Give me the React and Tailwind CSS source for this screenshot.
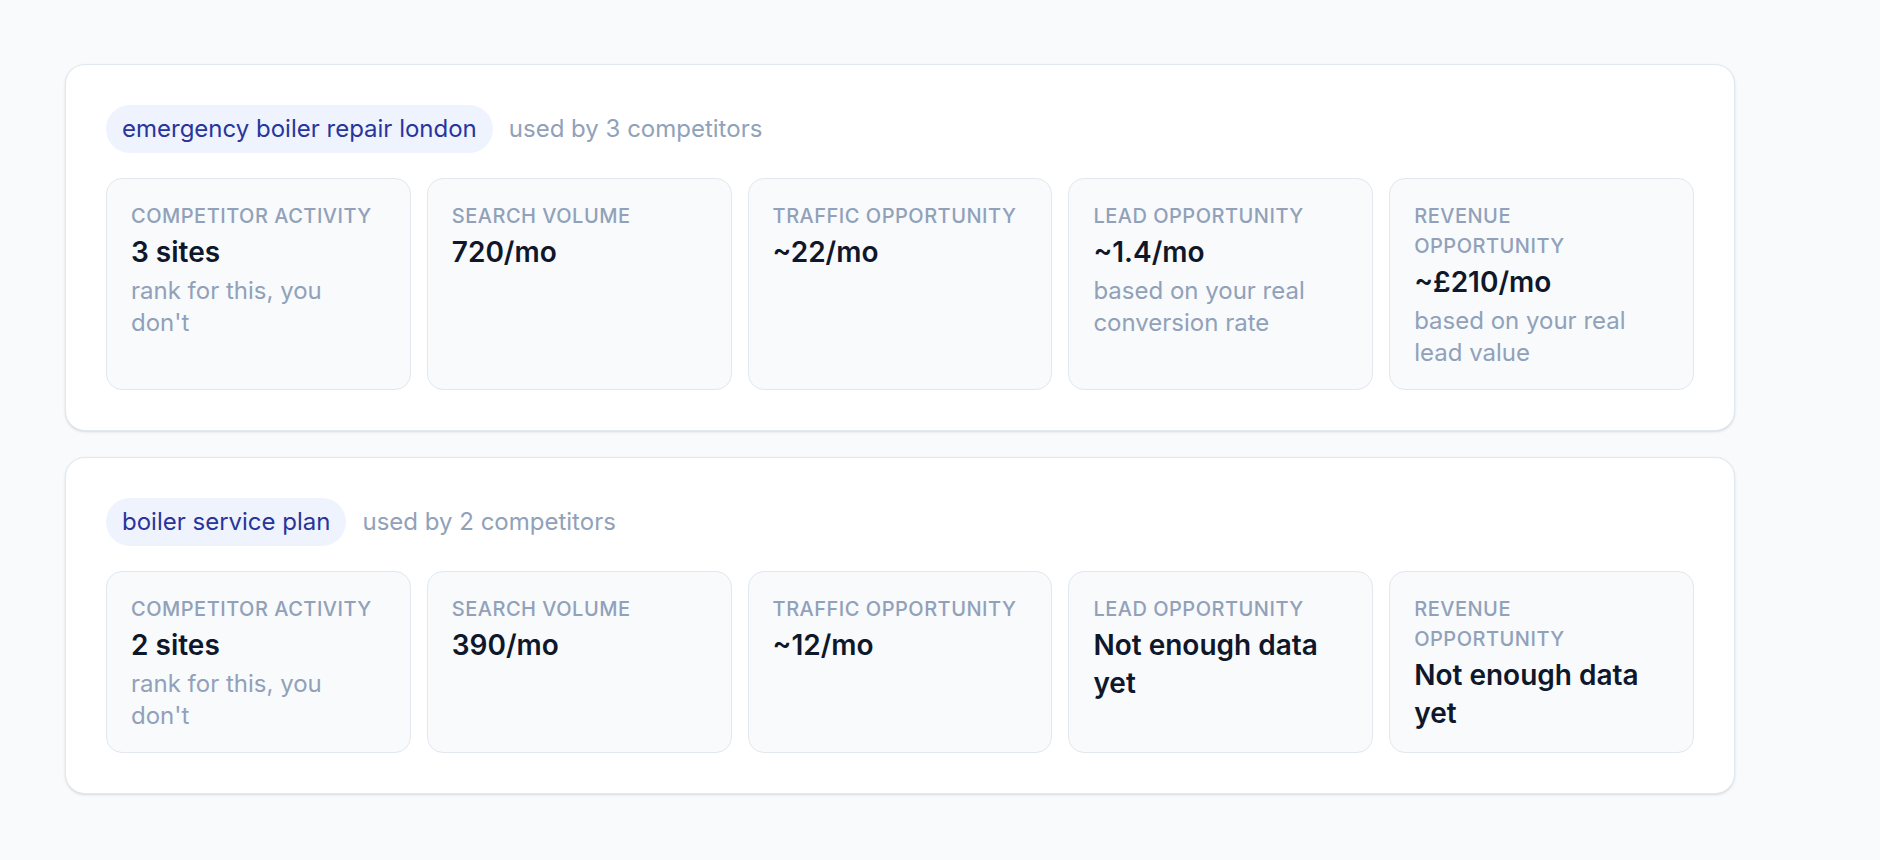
const keywords = [
  {
    term: 'emergency boiler repair london',
    competitors: 3,
    metrics: [
      { label: 'Competitor activity', value: '3 sites', note: "rank for this, you don't" },
      { label: 'Search volume', value: '720/mo' },
      { label: 'Traffic opportunity', value: '~22/mo' },
      { label: 'Lead opportunity', value: '~1.4/mo', note: 'based on your real conversion rate' },
      { label: 'Revenue opportunity', value: '~£210/mo', note: 'based on your real lead value' },
    ],
  },
  {
    term: 'boiler service plan',
    competitors: 2,
    metrics: [
      { label: 'Competitor activity', value: '2 sites', note: "rank for this, you don't" },
      { label: 'Search volume', value: '390/mo' },
      { label: 'Traffic opportunity', value: '~12/mo' },
      { label: 'Lead opportunity', value: 'Not enough data yet' },
      { label: 'Revenue opportunity', value: 'Not enough data yet' },
    ],
  },
]

function Metric({ label, value, note }) {
  return (
    <div className="rounded-2xl border border-slate-200 bg-slate-50 pt-[22px] pb-5 pl-6 pr-7">
      <div className="text-[20px] leading-[30px] font-medium uppercase tracking-[0.025em] text-slate-400">
        {label}
      </div>
      <div className="mt-0.5 text-[28px] leading-[38px] font-semibold text-slate-900">{value}</div>
      {note && <div className="mt-1 text-[24px] leading-[32px] text-slate-400">{note}</div>}
    </div>
  )
}

function KeywordCard({ term, competitors, metrics }) {
  return (
    <div className="rounded-[20px] border border-slate-200 bg-white p-10 shadow-sm">
      <div className="flex items-center gap-4">
        <span className="rounded-full bg-[#eef3fe] px-4 py-2 text-[24px] leading-[32px] text-[#27359c]">
          {term}
        </span>
        <span className="text-[24px] leading-[32px] text-slate-400">used by {competitors} competitors</span>
      </div>
      <div className="mt-[25px] grid grid-cols-5 gap-4">
        {metrics.map((m) => (
          <Metric key={m.label} {...m} />
        ))}
      </div>
    </div>
  )
}

export default function App() {
  return (
    <div className="min-h-screen bg-slate-50 pl-[65px] pt-16 font-['Inter',sans-serif]">
      <div className="flex w-[1670px] flex-col gap-[26px]">
        {keywords.map((k) => (
          <KeywordCard key={k.term} {...k} />
        ))}
      </div>
    </div>
  )
}
